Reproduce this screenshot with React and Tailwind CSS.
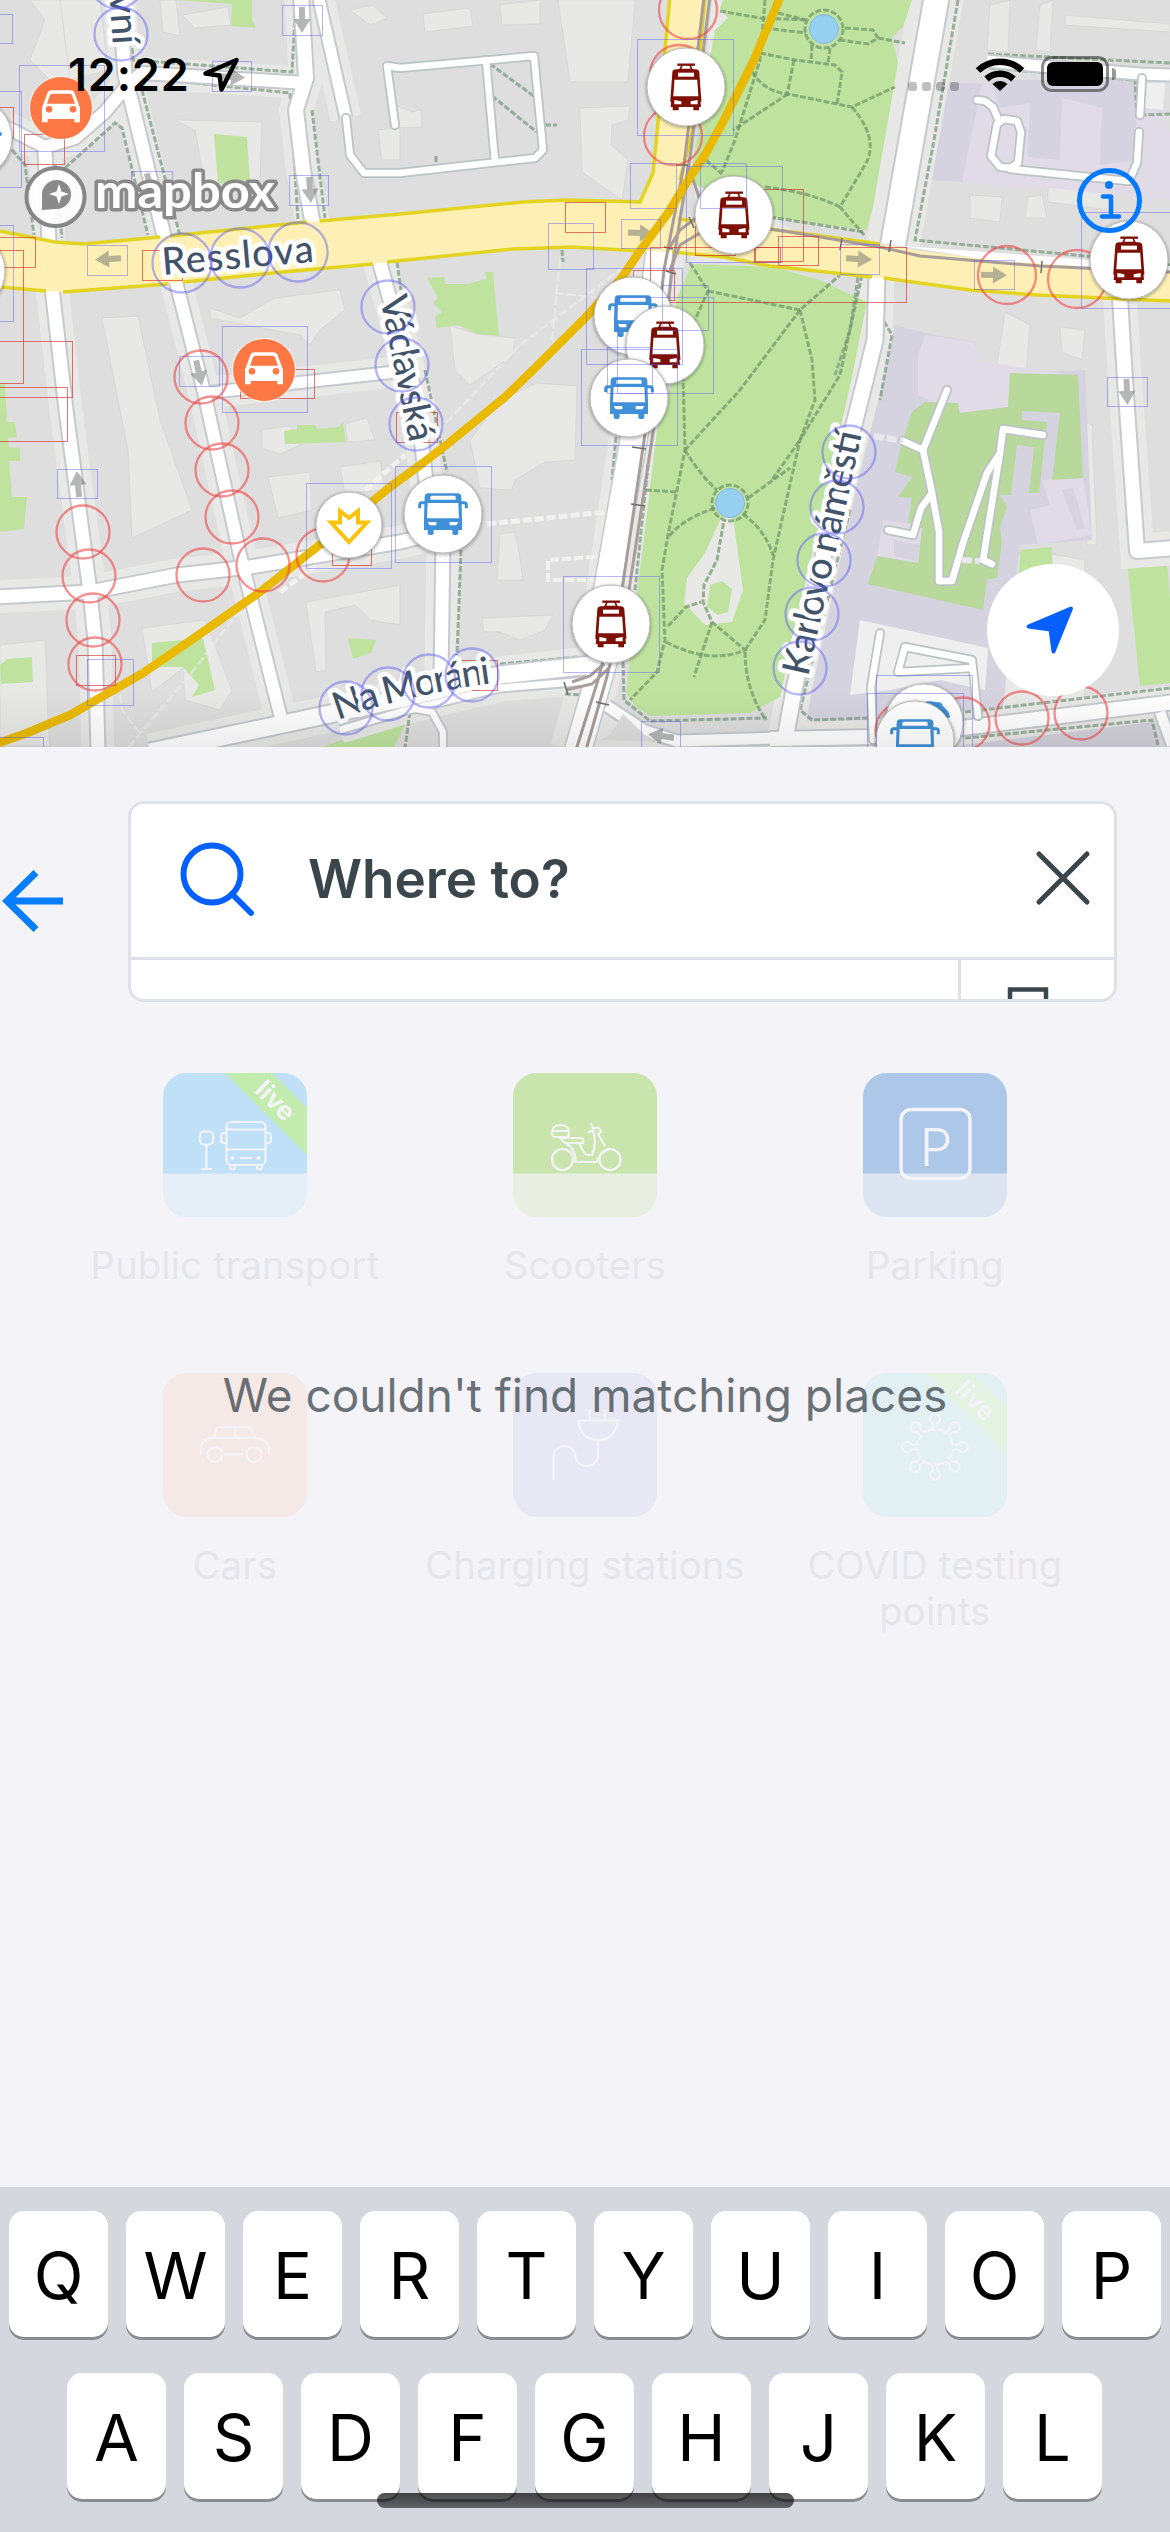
import React from "react";

const CASING = "#c6cace";
const SIDEWALK = "#e8e8e6";
const PARK = "#bfe39f";
const CAMPUS_PARK = "#b8d99b";
const WATER = "#97cff0";

const STREETS = [
  ["M119,-5 L125,75 L165,240", 13],
  ["M175,278 L204,392 L240,555 L284,730", 12],
  ["M45,150 L49,243", 13],
  ["M52,288 L66,410 L90,592 L95,640 L98,750", 13],
  ["M8,128 L45,147 L75,138 L105,112 L125,88 L142,73 L306,83", 12],
  ["M301,-5 L306,78 L296,110 L303,170 L313,225", 14],
  ["M318,-5 L346,118", 11],
  ["M379,260 L390,300 L417,400 L428,500 L443,540 L441,675", 13],
  ["M-5,597 L90,592 L177,575 L250,567 L400,542 L443,532", 13],
  ["M205,393 L395,372", 11],
  ["M150,752 L283,724 L400,699 L500,675 L600,664", 17],
  ["M340,730 L400,712 L500,688 L600,680", 7],
  ["M877,275 L875,340 L864,385 L840,480 L795,685 L784,745", 15],
  ["M1120,298 L1125,380 L1137,551 L1175,548", 14],
  ["M770,739 L873,737 L970,727 L1053,717 L1175,702", 14],
  ["M607,706 L645,731 L677,741 L780,738", 11],
  ["M410,708 L432,712 L443,732 L443,750", 6],
  ["M1160,712 L1172,745", 10],
];

const LANES = [
  "M346,118 L350,155 L364,173 L400,173 L535,158 L543,150 L534,56 L400,68 L387,66 L395,125",
  "M486,60 L495,162",
  "M977,100 L985,101 L993,107 L998,119",
  "M1000,167 L991,156 L997,124 L1004,119 L1017,121 L1021,132 L1018,163 L1010,168 Z",
  "M1010,169 L1118,180 L1129,181 L1137,163 L1139,132",
  "M1140,115 L1142,78",
  "M947,390 L923,450 L903,441",
  "M923,450 L932,493 L939,532 L939,581 L952,581 L963,543 L987,473 L1000,453 L1003,429 L1043,435",
  "M1000,453 L983,560 L992,564",
  "M932,493 L921,508 L913,535 L888,530",
  "M880,633 L871,687 L873,740",
  "M972,668 L898,672 L905,647 L972,660 L978,716",
];

const BUILDING_LIGHT = [
  "30,0 90,0 82,60 60,90 30,60 45,20",
  "160,0 176,0 180,36 163,32",
  "182,15 228,7 231,25 195,28",
  "175,120 262,122 260,180 205,185 195,130",
  "350,10 372,5 388,18 370,25",
  "378,130 400,128 400,160 382,160",
  "423,14 470,8 473,26 425,32",
  "500,5 540,0 540,24 502,25",
  "558,0 635,0 628,82 570,82",
  "397,106 412,112 421,110 422,127 395,128",
  "580,108 630,106 628,120 612,125 611,145 628,160 622,200 582,172",
  "60,0 100,0 108,70 70,80",
  "102,318 138,316 160,420 192,510 160,525 132,538 128,450 118,400",
  "210,308 240,318 275,298 340,290 345,310 320,330 310,345 300,335 210,318",
  "262,430 290,426 300,445 280,454 262,448",
  "268,477 310,472 312,510 278,518",
  "340,467 380,461 385,490 345,493",
  "345,424 367,418 375,440 348,442",
  "0,645 45,640 48,720 50,746 0,746",
  "142,628 205,620 232,690 220,710 185,700 183,668 152,692",
  "306,602 400,585 400,625 370,620 355,605 325,612 326,670 316,672",
  "537,383 577,386 575,460 545,462 515,480 512,490 480,488 470,440 500,400",
  "500,534 514,532 518,545 523,580 497,580",
  "482,618 553,615 545,630 520,640 500,632 484,632",
  "450,326 477,334 515,338 513,355 470,385 455,370",
  "1065,15 1170,24 1170,32 1065,25",
  "990,5 1010,0 1008,52 987,50",
  "1040,5 1053,0 1050,52 1036,50",
  "970,195 1002,197 1000,222 970,218",
  "1028,197 1042,195 1047,218 1025,218",
  "1048,185 1110,190 1110,210 1048,202",
  "1005,312 1030,325 1026,372 997,365",
  "1060,327 1085,330 1082,360 1062,352",
  "980,568 1030,550 1085,560 1085,740 1000,740",
  "1082,420 1092,425 1097,545 1087,545",
];

const GREENS = [
  "177,0 232,4 231,26 256,28 252,20 252,0",
  "214,134 247,137 250,183 218,183",
  "427,278 444,277 445,284 467,284 486,279 485,272 493,272 499,336 478,334 458,325 437,328 435,317 442,312 433,303 438,298",
  "0,383 5,383 7,422 15,422 17,437 8,438 9,447 20,448 20,461 9,461 12,497 27,497 24,529 0,532",
  "284,431 297,429 297,425 315,425 317,429 339,427 343,422 346,442 285,444",
  "0,665 7,659 32,657 33,682 1,684",
  "152,643 203,638 215,690 192,697 199,685 183,667 152,667",
  "348,638 376,640 371,653 353,659",
  "320,748 400,719 408,717 394,748",
  "1127,562 1167,560 1170,600 1170,683 1140,686",
  "1020,550 1052,547 1053,590 1018,590",
];

const PARKS = [
  "723,0 912,0 903,27 892,37 898,63 873,207 867,230 770,217 690,182 710,57 715,30 728,18 720,8",
  "692,264 773,267 820,280 867,302 852,377 780,697 750,713 650,716 636,707 626,693 638,587 657,430 673,380 676,300",
];

const PARK_PATHS = [
  "M720,11 L760,18 L806,20",
  "M778,13 L806,20",
  "M765,28 L806,33",
  "M845,28 L873,30 L878,38 L868,44 L840,40 M878,38 L905,43",
  "M760,53 L795,60 L835,65 L842,72 L837,105",
  "M812,45 L811,62 M830,48 L828,63",
  "M794,60 L787,95",
  "M765,0 L760,60 L735,140 L722,172",
  "M752,72 Q765,92 788,94 L852,107 L895,87",
  "M788,94 L733,130",
  "M852,107 Q880,140 865,165 L840,207 L864,235 M840,207 Q810,192 765,187",
  "M700,155 L722,174",
  "M770,217 L864,232",
  "M690,263 L708,291 L695,320 L680,345",
  "M708,291 L790,308 L800,310 L840,275",
  "M800,310 L812,360 L815,400 L800,440 L772,480",
  "M800,310 L770,350 L740,390 L685,450",
  "M683,375 L685,450 L668,535 L662,570 L665,640 L657,672 L630,700",
  "M685,450 Q700,475 717,490 M715,508 Q680,520 668,538",
  "M748,498 L790,468 M743,514 Q765,530 773,555 M668,626 L686,607 L701,602",
  "M862,275 L840,375 L800,440 L773,560 L765,620 L745,650 Q745,690 766,720",
  "M666,642 Q710,665 745,650 L712,622 L703,602 L704,585 L717,560 L724,520",
  "M712,622 L694,677",
  "M646,490 L676,492",
];

const FOOTPATHS = [
  "M132,48 L133,60 L292,72 L296,0",
  "M155,79 L290,93 L298,220",
  "M142,90 L180,236 M65,168 L115,123 L122,128 L148,235",
  "M12,150 L25,165 L34,235 M55,165 L62,238",
  "M312,110 L325,218",
  "M490,64 L535,97 M492,96 L538,133 M436,156 L436,166 M545,125 L557,125",
  "M397,262 L401,290 M425,370 L447,472",
  "M461,550 L457,655 M500,664 L578,657",
  "M616,437 L612,480 M648,465 L635,590",
  "M623,662 L624,700 L650,721 L767,718",
  "M958,0 L934,140 L915,240 L1075,255 L1170,265",
  "M988,54 L1170,63 M990,68 L1135,80 L1137,115 L1170,114",
  "M882,282 L882,318 L892,335 L880,400",
  "M858,277 L850,330 L835,375",
  "M850,510 L800,710 L812,720 L870,718 M965,712 L1170,688",
  "M965,738 L1152,720 L1158,745",
  "M565,694 L582,695 L570,746",
  "M648,255 L642,290 M562,250 L563,262",
  "M410,712 L405,748",
];

const RED_CIRCLES = [
  [688, 10, 29], [679, 74, 29], [673, 136, 29], [1007, 275, 29], [1077, 279, 29],
  [201, 377, 26.5], [212, 423, 26.5], [222, 470, 26.5], [232, 517, 26.5], [263, 565, 26.5],
  [203, 575, 26.5], [323, 555, 26.5], [83, 532, 26.5], [89, 576, 26.5], [93, 620, 26.5],
  [95, 664, 26.5], [963, 724, 26.5], [1022, 718, 26.5], [1081, 713, 26.5], [902, 730, 26.5],
];

const BLUE_CIRCLES = [
  [117, -18, 26.5], [121, 34, 26.5], [182, 263, 29.5], [240, 258, 29.5], [298, 252, 29.5],
  [388, 307, 26.5], [402, 365, 26.5], [416, 424, 26.5], [346, 708, 26.5], [388, 694, 26.5],
  [429, 681, 26.5], [472, 675, 26.5], [849, 452, 26.5], [837, 507, 26.5], [824, 560, 26.5],
  [812, 614, 26.5], [800, 668, 26.5],
];

const BLUE_RECTS = [
  [-20, 14, 32, 29], [282, 5, 40, 30], [212, 61, 39, 30], [19, 65, 85, 86], [-80, 91, 101, 96],
  [131, 171, 41, 30], [289, 175, 39, 30], [87, 245, 40, 30], [-80, 225, 93, 96], [222, 326, 85, 86],
  [179, 356, 40, 30], [637, 39, 96, 96], [630, 163, 46, 45], [700, 163, 46, 45], [686, 166, 96, 96],
  [621, 219, 39, 29], [548, 223, 45, 46], [586, 268, 96, 96], [662, 285, 46, 45], [617, 297, 96, 96],
  [581, 349, 96, 96], [607, 347, 45, 46], [840, 244, 39, 30], [974, 260, 40, 29], [1081, 212, 96, 96],
  [1107, 377, 40, 29], [876, 675, 96, 96], [867, 693, 96, 96], [395, 466, 96, 96], [563, 576, 96, 96],
  [641, 721, 39, 30], [57, 469, 40, 29], [306, 483, 85, 85], [87, 659, 46, 46], [-3, 737, 46, 20],
];

const RED_RECTS = [
  [-27, 107, 40, 30], [24, 134, 40, 30], [-5, 237, 40, 30], [-60, 250, 83, 133], [142, 250, 40, 30],
  [-60, 341, 132, 56], [-60, 387, 127, 54], [240, 369, 74, 29], [565, 202, 40, 30], [695, 226, 40, 29],
  [650, 247, 256, 55], [633, 270, 41, 30], [755, 189, 48, 72], [778, 236, 40, 29], [754, 247, 26, 15],
  [396, 412, 41, 30], [458, 660, 39, 30], [332, 535, 39, 30], [76, 655, 39, 30],
];

const ARROWS = [
  [302, 20, 90], [232, 77, 3], [150, 186, 76], [310, 190, 86], [108, 259, 177], [199, 373, 77],
  [78, 484, -95], [641, 233, 2], [859, 259, 3], [994, 275, 1], [1127, 392, 88], [661, 736, -172],
];

function Arrow({ x, y, r }) {
  return (
    <path
      transform={`translate(${x} ${y}) rotate(${r})`}
      d="M-13,-3 L-1,-3 L-1,-8.500 L13,0 L-1,8.500 L-1,3 L-13,3 Z"
      fill="#6b6f70"
      fillOpacity=".5"
    />
  );
}

function Disc({ x, y, r = 39, children }) {
  return (
    <g transform={`translate(${x} ${y})`}>
      <circle r={r + 1.500} cy="1" fill="#000" fillOpacity=".25" filter="url(#soft)" />
      <circle r={r} fill="#fff" stroke="#bdbdbd" strokeWidth="1" />
      {children}
    </g>
  );
}

function Tram({ x, y }) {
  return (
    <Disc x={x} y={y}>
      <g transform="scale(.3333)" fill="none" stroke="#7d0f05" strokeWidth="8">
        <path d="M-26,-67 H27" strokeWidth="7" />
        <path d="M-12,-66 L-18,-51 M12,-66 L18,-51 M-22,-52 H22" strokeWidth="5" />
        <path d="M-37,-44 Q-36,-49 -30,-49 H29 Q35,-49 36,-44 L42,40 H-43 Z" />
        <path d="M-36,-46 H36 L39,-22 H-39 Z" fill="#7d0f05" stroke="none" />
        <rect x="-24" y="-43" width="48" height="12" fill="#fff" stroke="none" />
        <path d="M-43,28 H42 L45,60 H-46 Z" fill="#7d0f05" stroke="none" />
        <path d="M-35,39 L-14,43 V52 H-35 Z M35,39 L14,43 V52 H35 Z" fill="#fff" stroke="none" />
        <path d="M-40,65 H-22 M22,65 H39" strokeWidth="10" />
      </g>
    </Disc>
  );
}

function BusShape() {
  return (
    <g transform="scale(.3333)">
      <path d="M-57,14 L-55,-52 Q-54,-62 -44,-62 H44 Q54,-62 55,-52 L57,14 V48 H46 V58 Q46,63 40,63 H34 Q28,63 28,58 V48 H-28 V58 Q-28,63 -34,63 H-40 Q-46,63 -46,58 V48 H-57 Z" fill="#3f90d6" />
      <path d="M-46,-33 H46 L48,13 H-48 Z M-34,-55 H34 Q38,-55 38,-50 V-43 H-38 V-50 Q-38,-55 -34,-55 Z M-46,24 H-20 V34 H-40 Z M46,24 H20 V34 H40 Z" fill="#fff" />
      <path d="M-54,-34 H-64 Q-70,-34 -70,-27 V-17 M54,-34 H64 Q70,-34 70,-27 V-17" fill="none" stroke="#3f90d6" strokeWidth="9" />
    </g>
  );
}

function Bus({ x, y }) {
  return (
    <Disc x={x} y={y}>
      <BusShape />
    </Disc>
  );
}

function Car({ x, y }) {
  return (
    <g transform={`translate(${x} ${y})`}>
      <circle r="32" fill="#fff" fillOpacity=".7" />
      <circle r="31" fill="#fd7845" />
      <g transform="scale(.3333)">
        <path d="M-57,43 V-1 L-41,-44 Q-38,-53 -28,-53 H28 Q38,-53 41,-44 L57,-1 V43 H40 V33 H-40 V43 Z" fill="#fff" />
        <path d="M-33,-38 Q-32,-43 -26,-43 H26 Q32,-43 33,-38 L42,-13 H-42 Z" fill="#fd7845" />
        <circle cx="-36" cy="4" r="10" fill="#fd7845" />
        <circle cx="36" cy="4" r="10" fill="#fd7845" />
      </g>
    </g>
  );
}

function CityMap() {
  const label = {
    fontFamily: 'Lato, "Open Sans", sans-serif',
    fontSize: 38,
    fontWeight: 500,
    fill: "#43546a",
    stroke: "#fff",
    strokeWidth: 9,
    strokeLinejoin: "round",
    paintOrder: "stroke",
  };
  return (
    <svg className="block h-[747px] w-[1170px]" viewBox="0 0 1170 747" fill="none">
      <defs>
        <filter id="soft" x="-20%" y="-20%" width="140%" height="140%">
          <feGaussianBlur stdDeviation="1.5" />
        </filter>
        <linearGradient id="fade" x1="0" y1="0" x2="0" y2="1">
          <stop offset="0" stopColor="#000" stopOpacity="0" />
          <stop offset="1" stopColor="#000" stopOpacity=".07" />
        </linearGradient>
        <path id="moran" d="M338,720 Q405,695 494,683" />
      </defs>

      <rect width="1170" height="747" fill="#dedede" />
      {BUILDING_LIGHT.map((p) => (
        <polygon key={p} points={p} fill={SIDEWALK} stroke="#d3d3d1" strokeWidth=".7" />
      ))}

      <polygon points="946,82 987,80 1142,78 1170,130 1170,200 1050,188 928,180" fill="#e0dbe7" />
      <polygon points="946,82 982,84 962,182 928,180" fill="#d5d3df" />
      <polygon points="990,80 1135,80 1137,160 1100,165 1102,108 1062,98 1060,160 1028,157 1030,103 1000,108" fill="#d5d3df" />
      <polygon points="895,325 925,333 975,342 982,375 1085,370 1092,540 1020,545 1000,740 800,718 850,500" fill="#d5d3df" />
      <polygon points="925,335 974,342 982,362 1068,374 1010,375 1008,407 958,413 918,395 918,355" fill="#e0dbe7" />
      <polygon points="1042,480 1083,478 1092,535 1038,545 1030,510 1050,505" fill="#e0dbe7" />
      <polygon points="1062,490 1073,488 1085,528 1077,530" fill="#d5d3df" />
      <polygon points="883,520 922,526 919,563 877,556" fill="#e0dbe7" />
      <polygon points="894,540 920,545 917,561 894,556" fill="#d5d3df" />
      <polygon points="860,620 988,648 985,690 940,680 890,690 850,695" fill="#efeff0" />
      <polygon points="1145,83 1165,83 1163,110 1145,108" fill="#efefef" />
      <polygon points="970,730 1155,722 1160,747 960,747" fill="#d2d1da" />

      {GREENS.map((p) => (
        <polygon key={p} points={p} fill={PARK} />
      ))}
      <polygon points="1010,373 1078,375 1083,478 1052,480 1060,413 1022,411 1022,420 1047,422 1039,493 1029,493 1034,447 1017,445 1011,495 1000,495 1007,507 1000,527 1002,542 997,578 987,579 983,610 868,584 877,556 918,563 922,528 908,523 912,498 898,497 912,477 895,472 902,442 912,412 925,402 958,403 960,413 1008,407" fill={CAMPUS_PARK} />

      {STREETS.slice(0, 15).map(([d, w]) => (
        <path key={d} d={d} stroke={SIDEWALK} strokeWidth={w + 20} />
      ))}
      <path d="M937,-5 L893,245" stroke={SIDEWALK} strokeWidth="54" />
      <path d="M660,250 L640,400 L612,583 L605,640 L575,750" stroke={SIDEWALK} strokeWidth="50" />
      <path d="M607,716 L645,740 L670,747 L600,747 Z" fill={SIDEWALK} />
      <path d="M712,0 L700,130 L690,262 L850,262 L770,217 L725,0 Z" fill={SIDEWALK} />

      {PARKS.map((p) => (
        <polygon key={p} points={p} fill={PARK} />
      ))}
      <path d="M721,518 L733,518 L743,590 L732,622 L705,625 L684,603 L687,578 L705,553 Z" fill={SIDEWALK} />
      <path d="M710,585 L722,581 L732,589 L728,612 L718,615 L707,607 Z" fill={PARK} />

      <g stroke="#7f9c86" strokeOpacity=".75" strokeWidth="3" strokeDasharray="6 2">
        {FOOTPATHS.map((d) => (
          <path key={d} d={d} />
        ))}
      </g>
      <g stroke="#6d9568" strokeOpacity=".7" strokeWidth="3" strokeDasharray="6 2">
        {PARK_PATHS.map((d) => (
          <path key={d} d={d} />
        ))}
        <circle cx="824" cy="29" r="19" />
        <circle cx="730" cy="503" r="18" />
      </g>
      <circle cx="824" cy="29" r="14.500" fill={WATER} stroke="#86b7e8" />
      <circle cx="730" cy="503" r="14.500" fill={WATER} stroke="#86b7e8" />

      <g stroke="#f1f1f0" strokeWidth="4" strokeDasharray="9 3">
        <path d="M487,524 L605,512" strokeWidth="5" />
        <path d="M595,557 L548,560 L548,580 L595,580" />
        <path d="M365,490 L405,455 M280,592 L330,555" strokeWidth="5" />
        <path d="M430,440 L520,345 L640,255 M240,610 L190,675 L122,755" strokeWidth="3" strokeOpacity=".45" />
        <path d="M560,260 L552,340 M555,293 L620,300" strokeWidth="2" strokeOpacity=".6" />
        <path d="M140,733 L122,710 L120,695" strokeWidth="2" strokeOpacity=".6" />
      </g>

      <g strokeLinejoin="round">
        {STREETS.map(([d, w]) => (
          <path key={d} d={d} stroke={CASING} strokeWidth={w + 4} />
        ))}
        <path d="M937,-5 L893,245" stroke={CASING} strokeWidth="28" />
        <path d="M1170,75 L1140,74 L1040,66 L987,61" stroke={CASING} strokeWidth="15" />
        <path d="M660,246 L650,330 L634,437 L607,590 L604,660 L578,750" stroke={CASING} strokeWidth="29" />
        {STREETS.map(([d, w]) => (
          <path key={d} d={d} stroke="#fff" strokeWidth={w} />
        ))}
        <path d="M937,-5 L893,245" stroke="#fff" strokeWidth="24" />
        <path d="M1170,75 L1140,74 L1040,66 L987,61" stroke="#fff" strokeWidth="11" />
        <path d="M660,246 L650,330 L634,437 L607,590 L604,660 L578,750" stroke="#fff" strokeWidth="26" />
      </g>
      <path d="M610,735 L623,714 L645,735 L660,742 L600,740 Z" fill="#dedede" />

      <g strokeLinecap="round" strokeLinejoin="round">
        {LANES.map((d) => (
          <path key={d} d={d} stroke="#bcc3c4" strokeWidth="10" />
        ))}
        {LANES.map((d) => (
          <path key={d} d={d} stroke="#fff" strokeWidth="6.500" />
        ))}
      </g>
      <path d="M874,436 L903,441 M962,560 L980,561" stroke="#e8e8ec" strokeWidth="6" strokeDasharray="10 3" />

      <path d="M903,246 L1000,253 L1170,266 L1170,274 L1000,262 Z" fill="#fff" />
      <path
        d="M0,231 L55,242 L83,244 L160,237 L320,221 L400,214 L523,202 L567,200 L640,202 L653,173 L657,133 L670,-3 L705,-3 L700,50 L692,133 L680,219 L695,221 L770,229 L880,244 L920,251 L1000,261 L1170,272 V301 L1037,295 L970,290 L873,277 L770,266 L723,257 L672,252 L640,251 L573,247 L513,249 L400,261 L283,272 L183,282 L63,292 L0,287 Z"
        fill="#fef0b5"
      />
      <g stroke="#e3d422" strokeWidth="3.500">
        <path d="M0,231 L55,242 L83,244 L160,237" />
        <path d="M170,236 L307,222 M320,221 L400,214 L523,202 L567,200 L640,202 L653,173 L657,133 L670,-3" />
        <path d="M705,-3 L700,50 L692,133 L680,180 M678,219 L695,221 L770,229 L880,244" />
        <path d="M1170,301 L1037,295 L970,290 L884,278 M872,277 L770,266 L723,257 L672,252 M640,251 L573,247 L513,249 L387,262 M373,264 L283,272 L183,282 M168,284 L63,292 M46,291 L0,287" />
      </g>

      <g stroke="#a89d98" strokeWidth="3">
        <path d="M704,-3 L684,165 L664,270 L650,400 L622,590 L598,680 L576,750" />
        <path d="M710,-3 L691,150 L672,270 L658,400 L629,590 L606,680 L586,750" />
        <path d="M688,165 L700,200 L720,222 L790,232 L880,247 L920,256 L1040,266 L1170,272" />
        <path d="M668,250 L680,230 L700,215 M670,270 L680,245 L705,230" />
        <path d="M604,664 L590,676 L572,682 M609,668 L592,684 L566,690" />
      </g>
      <g stroke="#6d6d70" strokeWidth="1.500">
        <path d="M842,238 L840,250 M891,240 L889,252 M1042,261 L1041,273 M664,247 L673,249 M666,271 L676,274 M632,447 L646,449 M631,504 L645,506 M564,682 L568,695 M596,702 L609,705 M676,165 L688,165 M689,217 L694,228" />
      </g>

      {ARROWS.map(([x, y, r]) => (
        <Arrow key={`${x}-${y}`} x={x} y={y} r={r} />
      ))}

      <path d="M781,-5 L754,60 L724,120 L705,155 L690,177 L668,213 L640,251 L620,280 L585,318 L533,370 L505,397 L450,442 L423,463 L390,487 L317,547 L260,592 L187,643 L143,673 L110,692 L70,715 L27,733 L-4,744" stroke="#e9b903" strokeWidth="8.500" strokeLinejoin="round" />

      <g stroke="#d62c2c" strokeOpacity=".65">
        {RED_RECTS.map(([x, y, w, h]) => (
          <rect key={`${x}-${y}`} x={x + 0.5} y={y + 0.5} width={w} height={h} />
        ))}
      </g>

      <text {...label} transform="translate(163 275) rotate(-5)" textLength="152">Resslova</text>
      <text {...label} transform="translate(380 298) rotate(78.500)" textLength="148">Václavská</text>
      <text {...label} transform="translate(808 677) rotate(-77.500)" textLength="249">Karlovo náměstí</text>
      <text {...label} transform="translate(113 45) rotate(86)" textAnchor="end">vní</text>
      <text {...label} textLength="158"><textPath href="#moran">Na Moráni</textPath></text>

      <Disc x={-27} y={138} />
      <circle cx="0" cy="134" r="2" fill="#3f90d6" />
      <Disc x={-34} y={271} />
      <g stroke="#f04444" strokeOpacity=".6" strokeWidth="2.300">
        {RED_CIRCLES.map(([x, y, r]) => (
          <circle key={`${x}-${y}`} cx={x} cy={y} r={r} />
        ))}
      </g>
      <path d="M323,542 L349,523" stroke="#e9b903" strokeWidth="8.500" />
      <Tram x={686} y={87} />
      <Tram x={734} y={215} />
      <Tram x={1129} y={260} />
      <Bus x={633} y={316} />
      <Tram x={665} y={345} />
      <Bus x={629} y={398} />
      <Bus x={443} y={514} />
      <Tram x={611} y={624} />
      <Bus x={924} y={723} />
      <path d="M926,704 Q942,702 948,718" stroke="#3f90d6" strokeWidth="5" />
      <Bus x={915} y={740} />
      <Car x={61} y={108} />
      <Car x={264} y={370} />
      <Disc x={349} y={525} r={33}>
        <path d="M-9,-14 L0,-7 L9,-14 V-2.500 H18 L0,17 L-18,-2.500 H-9 Z" stroke="#fac30a" strokeWidth="4" />
      </Disc>

      <g stroke="#5a5af5" strokeOpacity=".45">
        <g strokeWidth="2.300">
          {BLUE_CIRCLES.map(([x, y, r]) => (
            <circle key={`${x}-${y}`} cx={x} cy={y} r={r} />
          ))}
        </g>
        {BLUE_RECTS.map(([x, y, w, h]) => (
          <rect key={`${x}-${y}`} x={x + 0.5} y={y + 0.5} width={w} height={h} />
        ))}
      </g>

      <g>
        <circle cx="55.500" cy="197" r="29" fill="#fff" fillOpacity=".9" stroke="#7b7b7b" strokeOpacity=".9" strokeWidth="4" />
        <path d="M42,210 V194 A14.500,14.500 0 1 1 56,209 Z" fill="#8a8a8a" />
        <path d="M59,184 L61.500,191.500 L69,194 L61.500,196.500 L59,204 L56.500,196.500 L49,194 L56.500,191.500 Z" fill="#fff" />
        <text
          x="95"
          y="208"
          textLength="180"
          lengthAdjust="spacingAndGlyphs"
          fontFamily="Lato, sans-serif"
          fontSize="48"
          fontWeight="700"
          fill="#fff"
          stroke="#8a8a8a"
          strokeWidth="7"
          strokeLinejoin="round"
          paintOrder="stroke"
        >
          mapbox
        </text>
      </g>

      <rect y="690" width="1170" height="57" fill="url(#fade)" />
    </svg>
  );
}

function StatusBar() {
  return (
    <div className="absolute inset-x-0 top-0 flex h-[150px] items-start justify-between pl-[68px] pr-[54px] pt-[50px]">
      <div className="flex items-start">
        <span className="w-[122px] whitespace-nowrap font-[Inter] text-[45px] font-semibold leading-[50px] tracking-[0.8px] text-black">12:22</span>
        <svg className="ml-[11px] mt-[6px] h-[38px] w-[40px]" viewBox="0 0 40 38" fill="none">
          <path d="M35.500,4 L4.500,17.500 L18.500,19.500 L20.500,33.500 Z" stroke="#000" strokeWidth="4.500" strokeLinejoin="round" />
        </svg>
      </div>
      <div className="flex items-start">
        <div className="mr-[15px] mt-[32px] flex gap-[5px]">
          <i className="size-[9px] rounded-[3px] bg-black/25" />
          <i className="size-[9px] rounded-[3px] bg-black/25" />
          <i className="size-[9px] rounded-[3px] bg-black/25" />
          <i className="size-[9px] rounded-[3px] bg-black/25" />
        </div>
        <svg className="mt-[5px] h-[37px] w-[52px]" viewBox="0 0 52 37" fill="none">
          <path d="M4,15.500 A32,32 0 0 1 48,15.500 M12.500,24 A20,20 0 0 1 39.500,24" stroke="#000" strokeWidth="6.500" />
          <path d="M26,36 L18.500,29 A11,11 0 0 1 33.500,29 Z" fill="#000" />
        </svg>
        <div className="ml-[15px] mt-[6px] h-[36px] w-[68px] rounded-[11px] border-[3px] border-black/45 p-[3px]">
          <div className="h-full rounded-[6px] bg-black" />
        </div>
        <div className="ml-[3px] mt-[18px] h-[12px] w-[4px] rounded-r-full bg-black/40" />
      </div>
    </div>
  );
}

const W = "#f3f3f8";

function LiveRibbon({ color }) {
  return (
    <g>
      <polygon points="62,0 109,0 144,35 144,82" fill={color} />
      <text transform="translate(106 34) rotate(45)" textAnchor="middle" fontFamily="Inter, sans-serif" fontWeight="700" fontSize="26" fill={W}>live</text>
    </g>
  );
}

const TILES = [
  {
    name: "Public transport",
    top: "#bfe0f7",
    base: "#e5edf6",
    ribbon: "#c3ebad",
    icon: (
      <g>
        <rect x="63.500" y="49" width="39" height="43" rx="5" />
        <path d="M64,56.500 H102 M64,76.500 H102 M77,85 H89" />
        <path d="M63,60 H61 Q58,60 58,64 V67 Q58,70 61,70 H63 M103,60 H105 Q108,60 108,64 V67 Q108,70 105,70 H103" />
        <path d="M67,92 V94 Q67,96.500 69.500,96.500 Q72,96.500 72,94 V92 M94,92 V94 Q94,96.500 96.500,96.500 Q99,96.500 99,94 V92" />
        <circle cx="69.500" cy="85" r="1" />
        <circle cx="95.500" cy="85" r="1" />
        <rect x="37" y="58.500" width="13" height="13" rx="4" />
        <path d="M43.500,72 V96 M38,96 H49" />
      </g>
    ),
  },
  {
    name: "Scooters",
    top: "#cae4ae",
    base: "#e8eee2",
    icon: (
      <g>
        <circle cx="49.500" cy="86.500" r="10.500" />
        <circle cx="97" cy="86.500" r="10.500" />
        <path d="M39,60 Q39,52 47.500,52 Q56,52 56,60 Q56,64 53,64 H42 Q39,64 39,60 Z M39,58 H56" />
        <path d="M47,65 H68 Q71,65 70,70 H52 Z M52,70 Q62,74 63,89 H84 Q86,79 97,76" />
        <path d="M66,70 Q71,82 75,82 H79 Q84,71 80,57 L75,60 M78,50 L80,56 Q86,52 88,59 L85,61 L92,73" />
      </g>
    ),
  },
  {
    name: "Parking",
    top: "#adc7e8",
    base: "#dde5f2",
    icon: (
      <g>
        <rect x="38" y="36.500" width="69" height="69" rx="10" strokeWidth="3.500" />
        <text x="73" y="92.500" textAnchor="middle" fontFamily="Inter, sans-serif" fontWeight="300" fontSize="52" fill={W} stroke="none">P</text>
      </g>
    ),
  },
  {
    name: "Cars",
    top: "#f4e9e7",
    base: "#f4e9e7",
    icon: (
      <g>
        <circle cx="52" cy="81.500" r="7.500" />
        <circle cx="91" cy="81.500" r="7.500" />
        <path d="M38,82 V76 Q38,65 48,65 H92 Q106,66 106,78 V82 M60,81.500 H80 M51,65 L53,57 Q54,54 57,54 H83 Q86,54 87,56 L93,65 M72,54 V65" />
      </g>
    ),
  },
  {
    name: "Charging stations",
    top: "#e8e8f4",
    base: "#e8e8f4",
    icon: (
      <path d="M76.500,36 V47 M92,36 V47 M65,47.500 H105 Q102,67 85,67 Q68,67 65,47.500 M85,67 V84 A11.500,11.500 0 0 1 62.500,84 A11,11 0 0 0 40.500,84 V107" />
    ),
  },
  {
    name: "COVID testing points",
    top: "#e2f0f4",
    base: "#e2f0f4",
    ribbon: "#e3f2e1",
    icon: (
      <g>
        {[0, 45, 90, 135, 180, 225, 270, 315].map((a) => (
          <g key={a} transform={`translate(72 74) rotate(${a})`}>
            <path d="M-6,-17 Q-1,-18 -2.500,-23.500 A5,5 0 1 1 2.500,-23.500 Q1,-18 6,-17 Q11,-14 12,-12.500" />
          </g>
        ))}
      </g>
    ),
  },
];

function Tile({ tile }) {
  return (
    <div className="flex h-[300px] flex-col items-center">
      <div className="size-[144px] overflow-hidden rounded-[24px]">
        <svg className="block size-[144px]" viewBox="0 0 144 144" fill="none" stroke={W} strokeWidth="2.200">
          <g stroke="none">
            <rect width="144" height="144" fill={tile.base} />
            <rect width="144" height="100.500" fill={tile.top} />
            {tile.ribbon && <LiveRibbon color={tile.ribbon} />}
          </g>
          {tile.icon}
        </svg>
      </div>
      <div className="mt-[25px] w-[330px] text-center text-[38px] leading-[46px] tracking-[0.25px] text-[#e6e6ea]">{tile.name}</div>
    </div>
  );
}

function SearchCard() {
  return (
    <div className="ml-[64px] h-[201px] w-[989px] overflow-hidden rounded-[16px] border-[3px] border-[#dfe1e9] bg-white">
      <div className="flex h-[156px] items-center border-b-[3px] border-[#dfe1e9] pb-[4px] pl-[48px] pr-[20px]">
        <svg className="h-[76px] w-[76px]" viewBox="0 0 76 76" fill="none" stroke="#0560fd" strokeWidth="6">
          <circle cx="33" cy="33" r="28.500" />
          <path d="M53,53 L72,72" strokeLinecap="round" />
        </svg>
        <span className="ml-[53px] grow text-[53px] font-semibold leading-[60px] text-[#3b464c]">Where to?</span>
        <svg className="mb-[2px] mr-[3px] h-[56px] w-[56px]" viewBox="0 0 56 56" fill="none" stroke="#3b464c" strokeWidth="5">
          <path d="M4,4 L52,52 M52,4 L4,52" strokeLinecap="round" />
        </svg>
      </div>
      <div className="flex h-[60px] justify-end">
        <div className="flex w-[156px] border-l-[3px] border-[#dfe1e9] pl-[46px] pt-[27px]">
          <svg className="h-[56px] w-[42px]" viewBox="0 0 42 56" fill="none" stroke="#3b464c" strokeWidth="4.500">
            <path d="M3,54 V2.500 H39 V54 L21,40 Z" />
          </svg>
        </div>
      </div>
    </div>
  );
}

function Key({ children }) {
  return (
    <div className="flex h-[126px] w-[99px] items-center justify-center rounded-[15px] bg-white pt-[3px] text-[65px] font-normal leading-none text-black shadow-[0_3px_0_#8b8c90]">
      {children}
    </div>
  );
}

export default function App() {
  return (
    <div className="flex h-[2532px] w-[1170px] flex-col overflow-hidden bg-[#f3f3f8] font-[Inter,sans-serif]">
      <header className="relative h-[747px] shrink-0 overflow-hidden">
        <CityMap />
        <StatusBar />
        <div className="absolute left-[1077px] top-[168px]">
          <svg className="size-[65px]" viewBox="0 0 65 65" fill="none" stroke="#0579ff">
            <circle cx="32.500" cy="32.500" r="30" strokeWidth="5" />
            <circle cx="32" cy="17" r="4" fill="#0579ff" stroke="none" />
            <path d="M26,28.500 H34 V48 M25,48.500 H42" strokeWidth="4.500" strokeLinecap="round" strokeLinejoin="round" />
          </svg>
        </div>
        <div className="absolute left-[987px] top-[564px] flex size-[132px] items-center justify-center rounded-full bg-white">
          <svg className="mr-[6px] size-[50px]" viewBox="0 0 50 50">
            <path d="M46,3.500 L3.500,21.500 L25.500,24.500 L28.500,46.500 Z" fill="#0560fd" stroke="#0560fd" strokeWidth="4" strokeLinejoin="round" />
          </svg>
        </div>
      </header>

      <main className="flex h-[1440px] shrink-0 flex-col">
        <section className="mt-[54px] flex">
          <svg className="mt-[68px] h-[64px] w-[64px]" viewBox="0 0 64 64" fill="none" stroke="#077dff" strokeWidth="7">
            <path d="M63,32 H8 M36,3.500 L7,32 L36,60.500" />
          </svg>
          <SearchCard />
        </section>
        <section className="relative mt-[71px]">
          <div className="grid grid-cols-3 px-[60px]">
            {TILES.map((t) => (
              <Tile key={t.name} tile={t} />
            ))}
          </div>
          <p className="absolute inset-x-0 top-[292px] text-center text-[46px] leading-[60px] text-[#3b464c]/75">
            We couldn't find matching places
          </p>
        </section>
      </main>

      <footer className="relative h-[345px] shrink-0 bg-[#d5d7de] pt-[24px]">
        <div className="flex justify-center gap-[18px]">
          {"QWERTYUIOP".split("").map((k) => (
            <Key key={k}>{k}</Key>
          ))}
        </div>
        <div className="mt-[36px] flex justify-center gap-[18px] pr-px">
          {"ASDFGHJKL".split("").map((k) => (
            <Key key={k}>{k}</Key>
          ))}
        </div>
        <div className="absolute left-[377px] top-[306px] h-[15px] w-[417px] rounded-full bg-gradient-to-b from-black/70 to-black/55" />
      </footer>
    </div>
  );
}
